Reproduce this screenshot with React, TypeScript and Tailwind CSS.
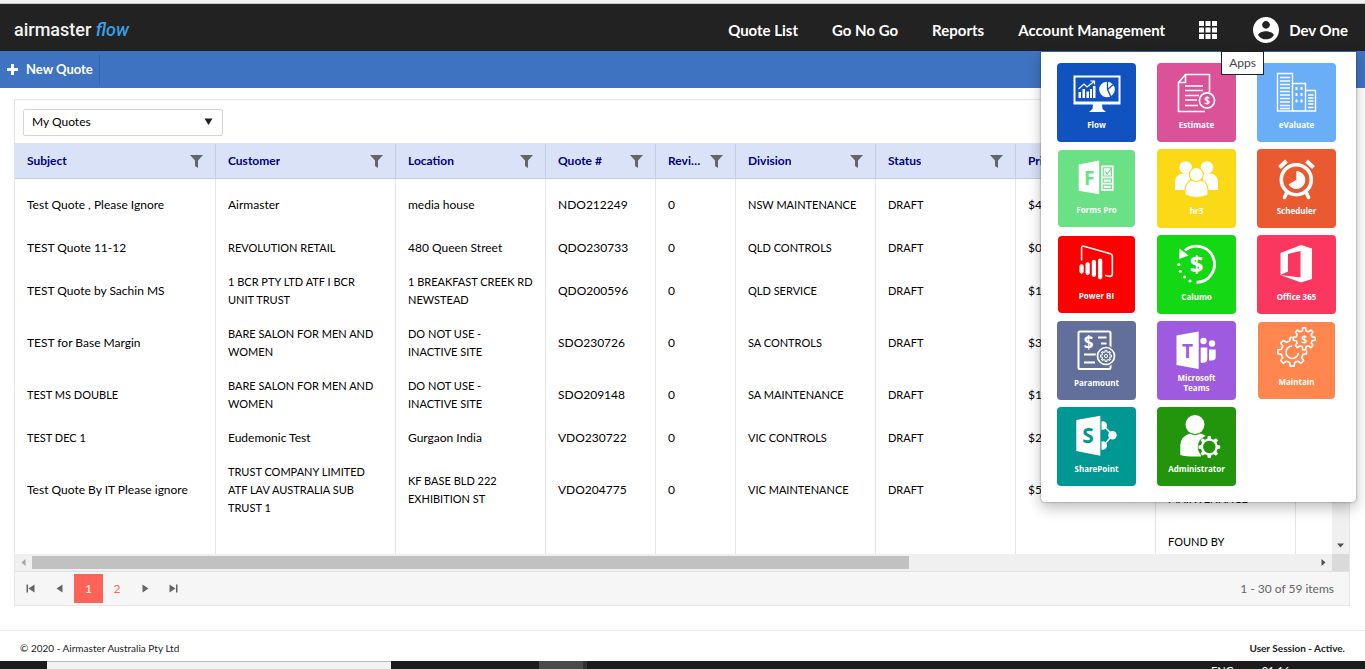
import type { ReactNode } from 'react';
import clsx from 'clsx';

type Quote = {
  subject: string;
  customer: string;
  location: string;
  number: string;
  revision: string;
  division: string;
  status: string;
  price: string;
  category: string;
};

type AppTile = {
  name: string;
  color: string;
  small?: boolean;
  icon: ReactNode;
};

const columns = [
  { title: 'Subject', width: 'w-[200px]' },
  { title: 'Customer', width: 'w-[180px]' },
  { title: 'Location', width: 'w-[150px]' },
  { title: 'Quote #', width: 'w-[110px]' },
  { title: 'Revision', width: 'w-[80px]' },
  { title: 'Division', width: 'w-[140px]' },
  { title: 'Status', width: 'w-[140px]' },
  { title: 'Price', width: 'w-[140px]' },
  { title: 'Category', width: 'w-[140px]' },
  { title: 'Owner', width: 'w-[140px]' },
];

const quotes: Quote[] = [
  { subject: 'Test Quote , Please Ignore', customer: 'Airmaster', location: 'media house', number: 'NDO212249', revision: '0', division: 'NSW MAINTENANCE', status: 'DRAFT', price: '$4,200.00', category: 'PREVENTIVE MAINTENANCE' },
  { subject: 'TEST Quote 11-12', customer: 'REVOLUTION RETAIL', location: '480 Queen Street', number: 'QDO230733', revision: '0', division: 'QLD CONTROLS', status: 'DRAFT', price: '$0.00', category: 'CONTROLS' },
  { subject: 'TEST Quote by Sachin MS', customer: '1 BCR PTY LTD ATF I BCR UNIT TRUST', location: '1 BREAKFAST CREEK RD NEWSTEAD', number: 'QDO200596', revision: '0', division: 'QLD SERVICE', status: 'DRAFT', price: '$1,150.00', category: 'SERVICE' },
  { subject: 'TEST for Base Margin', customer: 'BARE SALON FOR MEN AND WOMEN', location: 'DO NOT USE - INACTIVE SITE', number: 'SDO230726', revision: '0', division: 'SA CONTROLS', status: 'DRAFT', price: '$3,000.00', category: 'CONTROLS' },
  { subject: 'TEST MS DOUBLE', customer: 'BARE SALON FOR MEN AND WOMEN', location: 'DO NOT USE - INACTIVE SITE', number: 'SDO209148', revision: '0', division: 'SA MAINTENANCE', status: 'DRAFT', price: '$1,800.00', category: 'SERVICE' },
  { subject: 'TEST DEC 1', customer: 'Eudemonic Test', location: 'Gurgaon India', number: 'VDO230722', revision: '0', division: 'VIC CONTROLS', status: 'DRAFT', price: '$2,400.00', category: 'CONTROLS' },
  { subject: 'Test Quote By IT Please ignore', customer: 'TRUST COMPANY LIMITED ATF LAV AUSTRALIA SUB TRUST 1', location: 'KF BASE BLD 222 EXHIBITION ST', number: 'VDO204775', revision: '0', division: 'VIC MAINTENANCE', status: 'DRAFT', price: '$5,600.00', category: 'PREVENTIVE MAINTENANCE' },
  { subject: 'Test Quote', customer: 'Airmaster', location: 'media house', number: 'NDO212250', revision: '0', division: 'NSW SERVICE', status: 'DRAFT', price: '$900.00', category: 'FOUND BY TECHNICIAN DURING SCHEDULED MAINTENANCE ROUTINE VISIT' },
];

// Values typed in capitals are set one size down, quote numbers are not
const isCapitals = (value: string) => /^[A-Z0-9 -]*[A-Z]{2}[A-Z0-9 -]*$/.test(value) && !/^[A-Z]{3}\d/.test(value);

// Closed outline of a cog, used by several tiles
function gearPath(cx: number, cy: number, outer: number, inner: number, teeth: number) {
  const points: string[] = [];
  const step = (Math.PI * 2) / teeth;
  for (let i = 0; i < teeth; i++) {
    const a = i * step;
    const corners: [number, number][] = [
      [a - step * 0.3, inner],
      [a - step * 0.17, outer],
      [a + step * 0.17, outer],
      [a + step * 0.3, inner],
    ];
    corners.forEach(([angle, r]) => {
      points.push(`${(cx + Math.cos(angle) * r).toFixed(2)} ${(cy + Math.sin(angle) * r).toFixed(2)}`);
    });
  }
  return `M${points.join('L')}Z`;
}

function Glyph({ x, y, size, fill = '#fff', children }: { x: number; y: number; size: number; fill?: string; children: string }) {
  return (
    <text x={x} y={y} fontSize={size} fill={fill} fontWeight="700" textAnchor="middle" fontFamily="Open Sans, sans-serif">
      {children}
    </text>
  );
}

const apps: AppTile[] = [
  {
    name: 'Flow',
    color: 'bg-[#1152c1]',
    icon: (
      <g fill="#fff">
        <path fillRule="evenodd" d="M16.5 12.5H63.5V41.5H16.5ZM18.5 14.5V38.5H61.5V14.5Z" />
        <path d="M36 41H45L45.5 46L49 49H32L35.500 46Z" />
        <path d="M21.500 29H24V35H21.500ZM25.500 26H28V35H25.500ZM29.500 28.500H32V35H29.500ZM33 26H35V35H33ZM36 23H38.500V35H36Z" />
        <path d="M21.500 26L27 21L30 24L37 18.500M33.500 18H37.500V21.500" fill="none" stroke="#fff" strokeWidth="1.200" />
        <circle cx="50" cy="26.500" r="7.800" />
        <path d="M50.500 18V26.500L57 21M50.500 26.500L54 34" fill="none" stroke="#1152c1" strokeWidth="1.300" />
      </g>
    ),
  },
  {
    name: 'Estimate',
    color: 'bg-[#db5299]',
    icon: (
      <g fill="none" stroke="#fff" strokeWidth="1.600">
        <path d="M52.500 29V11.500H28.500L21.500 19.500V48.500H48M28.500 11.500V19.500H21.500" />
        <path d="M28 23H46M28 27.500H46M28 32.500H42M28 37H40M28 42.500H41" />
        <circle cx="50" cy="37.500" r="7.600" fill="#db5299" />
        <g stroke="none"><Glyph x={50} y={41.3} size={10}>$</Glyph></g>
      </g>
    ),
  },
  {
    name: 'eValuate',
    color: 'bg-[#6aaef8]',
    icon: (
      <g fill="none" stroke="#fff" strokeWidth="1.400">
        <path d="M20.500 10.500H35.500V48H20.500ZM35.500 20.500H48.500V48H35.500M48.500 27.500H58.500V48H48.500" />
        <path d="M23 14.500H33M23 18H33M23 21.500H33M23 25H33M23 28.500H33M23 32H33M23 35.500H33M23 39H33M23 42.500H33M23 45.500H33M51 32H56.500M51 35H56.500M51 38H56.500M51 41H56.500M51 44.500H56.500" />
        <path d="M39.500 24V27M44.500 24V27M39.500 30V33M44.500 30V33M39.500 36.500V39.500M44.500 36.500V39.500" strokeWidth="2" />
      </g>
    ),
  },
  {
    name: 'Forms Pro',
    color: 'bg-[#6ae185]',
    small: true,
    icon: (
      <g fill="#fff">
        <path d="M21 15L42.300 11V46L21 42.300Z" />
        <rect x="44.300" y="16" width="13" height="26.700" rx="1" />
        <path d="M46.500 18.500H55V27H46.500ZM46.500 30H55V33.500H46.500ZM46.500 36.500H55V40H46.500ZM48.500 22L50.500 25L55 19" fill="none" stroke="#6ae185" strokeWidth="1.200" />
        <Glyph x={32} y={36} size={20} fill="#6ae185">F</Glyph>
      </g>
    ),
  },
  {
    name: 'hr3',
    color: 'bg-[#fbd917]',
    icon: (
      <g fill="#fff">
        <circle cx="28.700" cy="18.500" r="6.300" />
        <circle cx="50" cy="18.500" r="6.300" />
        <path d="M18 41V34Q18 25 26 24.500H33V41ZM61 41V34Q61 25 53 24.500H46V41Z" />
        <g stroke="#fbd917" strokeWidth="1.200">
          <path d="M28 46V41Q28.500 31.500 36 31H43Q50.500 31.500 51 41V46Q39.500 51 28 46Z" />
          <circle cx="39.300" cy="25.500" r="7" />
        </g>
      </g>
    ),
  },
  {
    name: 'Scheduler',
    color: 'bg-[#ea5a31]',
    icon: (
      <g fill="none" stroke="#fff" strokeWidth="3.600">
        <circle cx="39.300" cy="30.700" r="15" />
        <path d="M22.500 18.500L29.500 12M56.500 18.500L49.500 12" strokeWidth="4" />
        <path d="M29.500 44L27.500 48.500M49.500 44L51.500 48.500" strokeLinecap="round" />
        <path d="M39.300 22A9 9 0 1 1 31.500 35.500L39.300 30.700Z" fill="#fff" stroke="none" />
      </g>
    ),
  },
  {
    name: 'Power BI',
    color: 'bg-[#fe0000]',
    small: true,
    icon: (
      <g fill="none" stroke="#fff" strokeLinecap="round">
        <path d="M24 25V12.500Q24 10 26.500 10.700L54 18.500Q56 19 56 21.500V39.500Q56 42 53.500 42L49 41" strokeWidth="1.600" />
        <path d="M24 31.500V37M30.300 29.500V38.500M36.800 27V40.500M43.300 25.500V43" strokeWidth="4.400" />
      </g>
    ),
  },
  {
    name: 'Calumo',
    color: 'bg-[#14d813]',
    icon: (
      <g fill="#fff">
        <path d="M28 15.500A18 18 0 1 1 39.500 47.300" fill="none" stroke="#fff" strokeWidth="2.800" />
        <path d="M22.500 13.500L31.500 20.500L22.300 24Z" />
        <circle cx="21.800" cy="29.500" r="1.600" />
        <circle cx="23.300" cy="36.500" r="1.600" />
        <circle cx="27.500" cy="42" r="1.600" />
        <circle cx="33" cy="46" r="1.600" />
        <Glyph x={39.5} y={38} size={24}>$</Glyph>
      </g>
    ),
  },
  {
    name: 'Office 365',
    color: 'bg-[#fb375f]',
    icon: (
      <path fill="#fff" d="M23.500 18L44 10L55 13.500V44L44 47.500L23.500 40L43.500 42.500V16L31 19V36.500L23.500 40Z" />
    ),
  },
  {
    name: 'Paramount',
    color: 'bg-[#626f9b]',
    icon: (
      <g fill="none" stroke="#fff" strokeWidth="2">
        <rect x="21.500" y="10.500" width="32" height="37.500" rx="1.500" />
        <path d="M41 16.500H49.500M44 22.500H49.500M27 33.500H42M27 41.500H38" />
        <circle cx="49" cy="35" r="10.500" fill="#626f9b" stroke="none" />
        <circle cx="49" cy="35" r="8.500" strokeWidth="1.700" />
        <path d={gearPath(49, 35, 5.5, 4.2, 8)} strokeWidth="1.100" />
        <circle cx="49" cy="35" r="1.600" strokeWidth="1" />
        <g stroke="none"><Glyph x={31.5} y={27.5} size={17}>$</Glyph></g>
      </g>
    ),
  },
  {
    name: 'Microsoft Teams',
    color: 'bg-[#9e5be0]',
    icon: (
      <g fill="#fff">
        <path d="M19.500 14.500L41.700 10.500V48L19.500 44Z" />
        <circle cx="46.500" cy="20" r="3.200" />
        <circle cx="55" cy="22.500" r="3.200" />
        <path d="M43.700 26.500H50.300V38Q50.300 41.700 46.500 41.700H43.700ZM52 28.500H58.700V36Q58.700 39.500 54.500 39.500H52Z" />
        <Glyph x={30.5} y={36.5} size={19} fill="#9e5be0">T</Glyph>
      </g>
    ),
  },
  {
    name: 'Maintain',
    color: 'bg-[#ff864f]',
    small: true,
    icon: (
      <g fill="none" stroke="#fff" strokeWidth="1.700" strokeLinejoin="round">
        <path d={gearPath(35, 31, 15, 11.5, 8)} />
        <path d="M35 25A6.500 6.500 0 1 0 41.500 32" />
        <circle cx="47.500" cy="17.500" r="12.500" fill="#ff864f" stroke="none" />
        <path d={gearPath(47.5, 17.5, 11.5, 8.5, 8)} />
        <g stroke="none"><Glyph x={47.5} y={21.5} size={11}>$</Glyph></g>
      </g>
    ),
  },
  {
    name: 'SharePoint',
    color: 'bg-[#019793]',
    icon: (
      <g fill="#fff">
        <path d="M46.500 18.500L55.500 28L46.500 38.500" fill="none" stroke="#fff" strokeWidth="1.500" />
        <path d="M44.500 14.500A4.200 4.200 0 1 1 44.500 22.500ZM44.500 34.500A4.200 4.200 0 1 1 44.500 42.500Z" />
        <circle cx="55.500" cy="28.300" r="4.200" />
        <path d="M19.300 13L43.300 8.700V48.700L19.300 44Z" />
        <Glyph x={31} y={36} size={21} fill="#019793">S</Glyph>
      </g>
    ),
  },
  {
    name: 'Administrator',
    color: 'bg-[#22950d]',
    icon: (
      <g fill="#fff">
        <circle cx="38" cy="17.500" r="9.500" />
        <path d="M23.300 48V38Q24 29 33 26.500Q38 29.500 43 26.500Q49 28 51 31L42 36L44 49.500Q30 50 23.300 48Z" />
        <circle cx="52.300" cy="40" r="11.500" fill="#22950d" />
        <path fillRule="evenodd" d={`${gearPath(52.3, 40, 11, 8.5, 8)}M58.500 40A6.200 6.200 0 1 0 46.100 40A6.200 6.200 0 1 0 58.500 40Z`} />
      </g>
    ),
  },
];

function FilterIcon() {
  return (
    <svg width="13" height="13" viewBox="0 0 13 13" className="shrink-0" aria-hidden="true">
      <path d="M0 0H13L8 5.500V13L5 11V5.500Z" fill="#656565" />
    </svg>
  );
}

function Arrow({ d, className }: { d: string; className?: string }) {
  return (
    <svg width="9" height="9" viewBox="0 0 9 9" className={className} aria-hidden="true">
      <path d={d} fill="currentColor" />
    </svg>
  );
}

function AppsMenu() {
  return (
    <div className="absolute top-full right-[9px] z-20 mt-px h-[450px] rounded-b-sm bg-white px-4 pt-[11px] shadow-[0_0_2px_rgba(0,0,0,0.5),0_6px_14px_rgba(0,0,0,0.25)]">
      <div className="grid grid-cols-[79px_79px_79px] gap-x-[21px] gap-y-[7px] pr-1">
        {apps.map(app => (
          <a
            key={app.name}
            href="#"
            className={clsx('flex flex-col overflow-hidden rounded-[4px]', app.color, app.small ? 'm-px h-[77px]' : 'h-[79px]')}
          >
            <svg viewBox="0 0 79 52" className={clsx('w-[79px] shrink-0', app.small ? '-ml-px h-[50px]' : 'h-[52px]')} aria-hidden="true">
              {app.icon}
            </svg>
            <span className="flex h-5 items-center justify-center px-4 text-center font-['Open_Sans',sans-serif] text-[8px] leading-[10px] font-bold text-white">
              {app.name}
            </span>
          </a>
        ))}
      </div>
    </div>
  );
}

function Header() {
  return (
    <header className="relative flex h-[47px] shrink-0 items-center justify-between bg-[#222] px-[14px] pt-[5px] text-white">
      <a href="#" className="font-['Roboto',sans-serif] text-[18px] leading-6 font-medium text-[#f2f2f2]">
        airmaster <span className="text-[#3a9fe8] italic">flow</span>
      </a>
      <nav className="flex items-center gap-[34px] pr-[3px] text-[15px] font-bold">
        <a href="#">Quote List</a>
        <a href="#">Go No Go</a>
        <a href="#">Reports</a>
        <a href="#">Account Management</a>
        <div className="flex items-center gap-9">
          <button type="button" aria-label="Apps">
            <svg width="18" height="18" viewBox="0 0 18 18" fill="#fff" aria-hidden="true">
              <path d="M0 0H5V5H0ZM6.500 0H11.500V5H6.500ZM13 0H18V5H13ZM0 6.500H5V11.500H0ZM6.500 6.500H11.500V11.500H6.500ZM13 6.500H18V11.500H13ZM0 13H5V18H0ZM6.500 13H11.500V18H6.500ZM13 13H18V18H13Z" />
            </svg>
          </button>
          <a href="#" className="flex items-center gap-[10px]">
            <svg width="26" height="26" viewBox="2 2 20 20" fill="#fff" aria-hidden="true">
              <path d="M12 2C6.480 2 2 6.480 2 12s4.480 10 10 10 10-4.480 10-10S17.520 2 12 2zm0 3c1.660 0 3 1.340 3 3s-1.340 3-3 3-3-1.340-3-3 1.340-3 3-3zm0 14.200c-2.500 0-4.710-1.280-6-3.220.030-1.990 4-3.080 6-3.080 1.990 0 5.970 1.090 6 3.080-1.290 1.940-3.500 3.220-6 3.220z" />
            </svg>
            Dev One
          </a>
        </div>
      </nav>
      <AppsMenu />
      <div role="tooltip" className="absolute top-full right-[101px] z-30 flex h-6 w-[43px] items-center justify-center border border-[#222] bg-white text-[12px] text-[#444]">
        Apps
      </div>
    </header>
  );
}

function QuoteGrid() {
  return (
    <section className="mt-[11px] mr-[15px] ml-[14px] border border-[#e6e6e6]">
      <div className="flex h-[43px] items-center px-2">
        <div className="relative">
          <select aria-label="Quote view" className="h-[27px] w-[200px] appearance-none rounded-[2px] border border-[#d5d5d5] bg-white px-2 pb-px text-[12px]">
            <option>My Quotes</option>
          </select>
          <Arrow d="M0.500 1.500H8.500L4.500 8Z" className="pointer-events-none absolute top-[9px] right-[10px] text-[#222]" />
        </div>
      </div>

      <div className="overflow-hidden border-y border-t-[#e0e3ec] border-b-[#c3cde4] bg-[#d9e2f6] pr-[17px]">
        <table className="w-[1420px] table-fixed border-separate border-spacing-0 text-[#000080]">
          <thead>
            <tr>
              {columns.map((col, i) => (
                <th key={col.title} className={clsx('h-[34px] px-3 text-left text-[12px] font-bold', col.width, i > 0 && 'border-l border-[#c3cde4]')}>
                  <div className="flex items-center justify-between gap-2">
                    <span className="truncate">{col.title}</span>
                    <FilterIcon />
                  </div>
                </th>
              ))}
            </tr>
          </thead>
        </table>
      </div>

      <div className="flex h-[375px]">
        <div className="min-w-0 flex-1 overflow-hidden">
          <table className="w-[1420px] table-fixed border-separate border-spacing-0 leading-[18px] text-black">
            <colgroup>
              {columns.map(col => (
                <col key={col.title} className={col.width} />
              ))}
            </colgroup>
            <tbody>
              {quotes.map(quote => (
                <tr key={quote.number}>
                  {[...Object.values(quote), ''].map((value, i) => (
                    <td
                      key={i}
                      className={clsx(
                        'px-3 py-2 leading-[18px]',
                        isCapitals(value) ? 'text-[11px]' : 'text-[12px]',
                        i > 0 && 'border-l border-[#e6e6e6]',
                      )}
                    >
                      {value}
                    </td>
                  ))}
                </tr>
              ))}
            </tbody>
          </table>
        </div>
        <div className="flex w-[17px] flex-col items-center justify-end bg-[#f0f0f0] pb-1">
          <Arrow d="M1 2.500H8L4.500 6.500Z" className="text-[#505050]" />
        </div>
      </div>

      {/* Horizontal scroll bar */}
      <div className="flex h-[17px] bg-[#dadada]">
        <div className="flex flex-1 items-center bg-[#f0f0f0] px-1">
          <Arrow d="M6.500 1V8L2.500 4.500Z" className="text-[#a3a3a3]" />
          <div className="mr-auto ml-1 h-[13px] w-[67%] bg-[#c1c1c1]" />
          <Arrow d="M2.500 1V8L6.500 4.500Z" className="text-[#505050]" />
        </div>
        <div className="w-[17px]" />
      </div>

      <div className="flex h-[34px] items-center justify-between border-t border-[#e0e0e0] bg-[#f6f6f6] pr-[15px] pl-px text-[12px] text-[#656565]">
        <div className="flex items-center">
          <button type="button" aria-label="First page" className="flex h-[29px] w-[29px] items-center justify-center">
            <Arrow d="M0.500 0.500H2V8.500H0.500ZM8.500 0.500V8.500L2.500 4.500Z" />
          </button>
          <button type="button" aria-label="Previous page" className="flex h-[29px] w-[29px] items-center justify-center">
            <Arrow d="M7.500 0.500V8.500L1.500 4.500Z" />
          </button>
          <button type="button" className="h-[29px] w-[29px] bg-[#ff6358] text-white">1</button>
          <button type="button" className="h-[29px] w-7 text-[#ff6358]">2</button>
          <button type="button" aria-label="Next page" className="flex h-[29px] w-7 items-center justify-center">
            <Arrow d="M1.500 0.500V8.500L7.500 4.500Z" />
          </button>
          <button type="button" aria-label="Last page" className="flex h-[29px] w-7 items-center justify-center">
            <Arrow d="M7 0.500H8.500V8.500H7ZM0.500 0.500V8.500L6.500 4.500Z" />
          </button>
        </div>
        <span>1 - 30 of 59 items</span>
      </div>
    </section>
  );
}

export default function App() {
  return (
    <div className="flex h-screen flex-col overflow-hidden bg-white font-['Lato',sans-serif] text-black">
      <div className="h-1 shrink-0 border-b border-[#c8c8c8] bg-[#f1f1f1]" />
      <Header />
      <div className="flex h-[37px] shrink-0 items-center bg-[#3e73c1]">
        <button type="button" className="flex h-[31px] items-center gap-2 border-r border-[#3563ad] pr-1.5 pl-[7px] text-[13px] font-bold text-white">
          <svg width="11" height="11" viewBox="0 0 11 11" aria-hidden="true">
            <path d="M4 0H7V4H11V7H7V11H4V7H0V4H4Z" fill="#fff" />
          </svg>
          New Quote
        </button>
      </div>
      <main>
        <QuoteGrid />
      </main>
      <footer className="mt-6 flex h-[31px] shrink-0 items-center justify-between border-t border-[#ececec] px-5 pt-[5px] text-[10px] text-[#222]">
        <span>© 2020 - Airmaster Australia Pty Ltd</span>
        <span className="font-bold">User Session - Active.</span>
      </footer>
      <div className="flex min-h-0 flex-1 items-start overflow-hidden bg-[#1c1c1c] pl-[47px] text-[11px] leading-3 text-white">
        <div className="h-full w-[344px] border-t border-[#bbb] bg-[#f2f2f2]" />
        <div className="ml-[148px] h-full w-12 border-r-4 border-[#333] bg-[#4a4a4a]" />
        <div className="mt-1 mr-[75px] ml-auto flex gap-7">
          <span>ENG</span>
          <span>01:16</span>
        </div>
      </div>
    </div>
  );
}
